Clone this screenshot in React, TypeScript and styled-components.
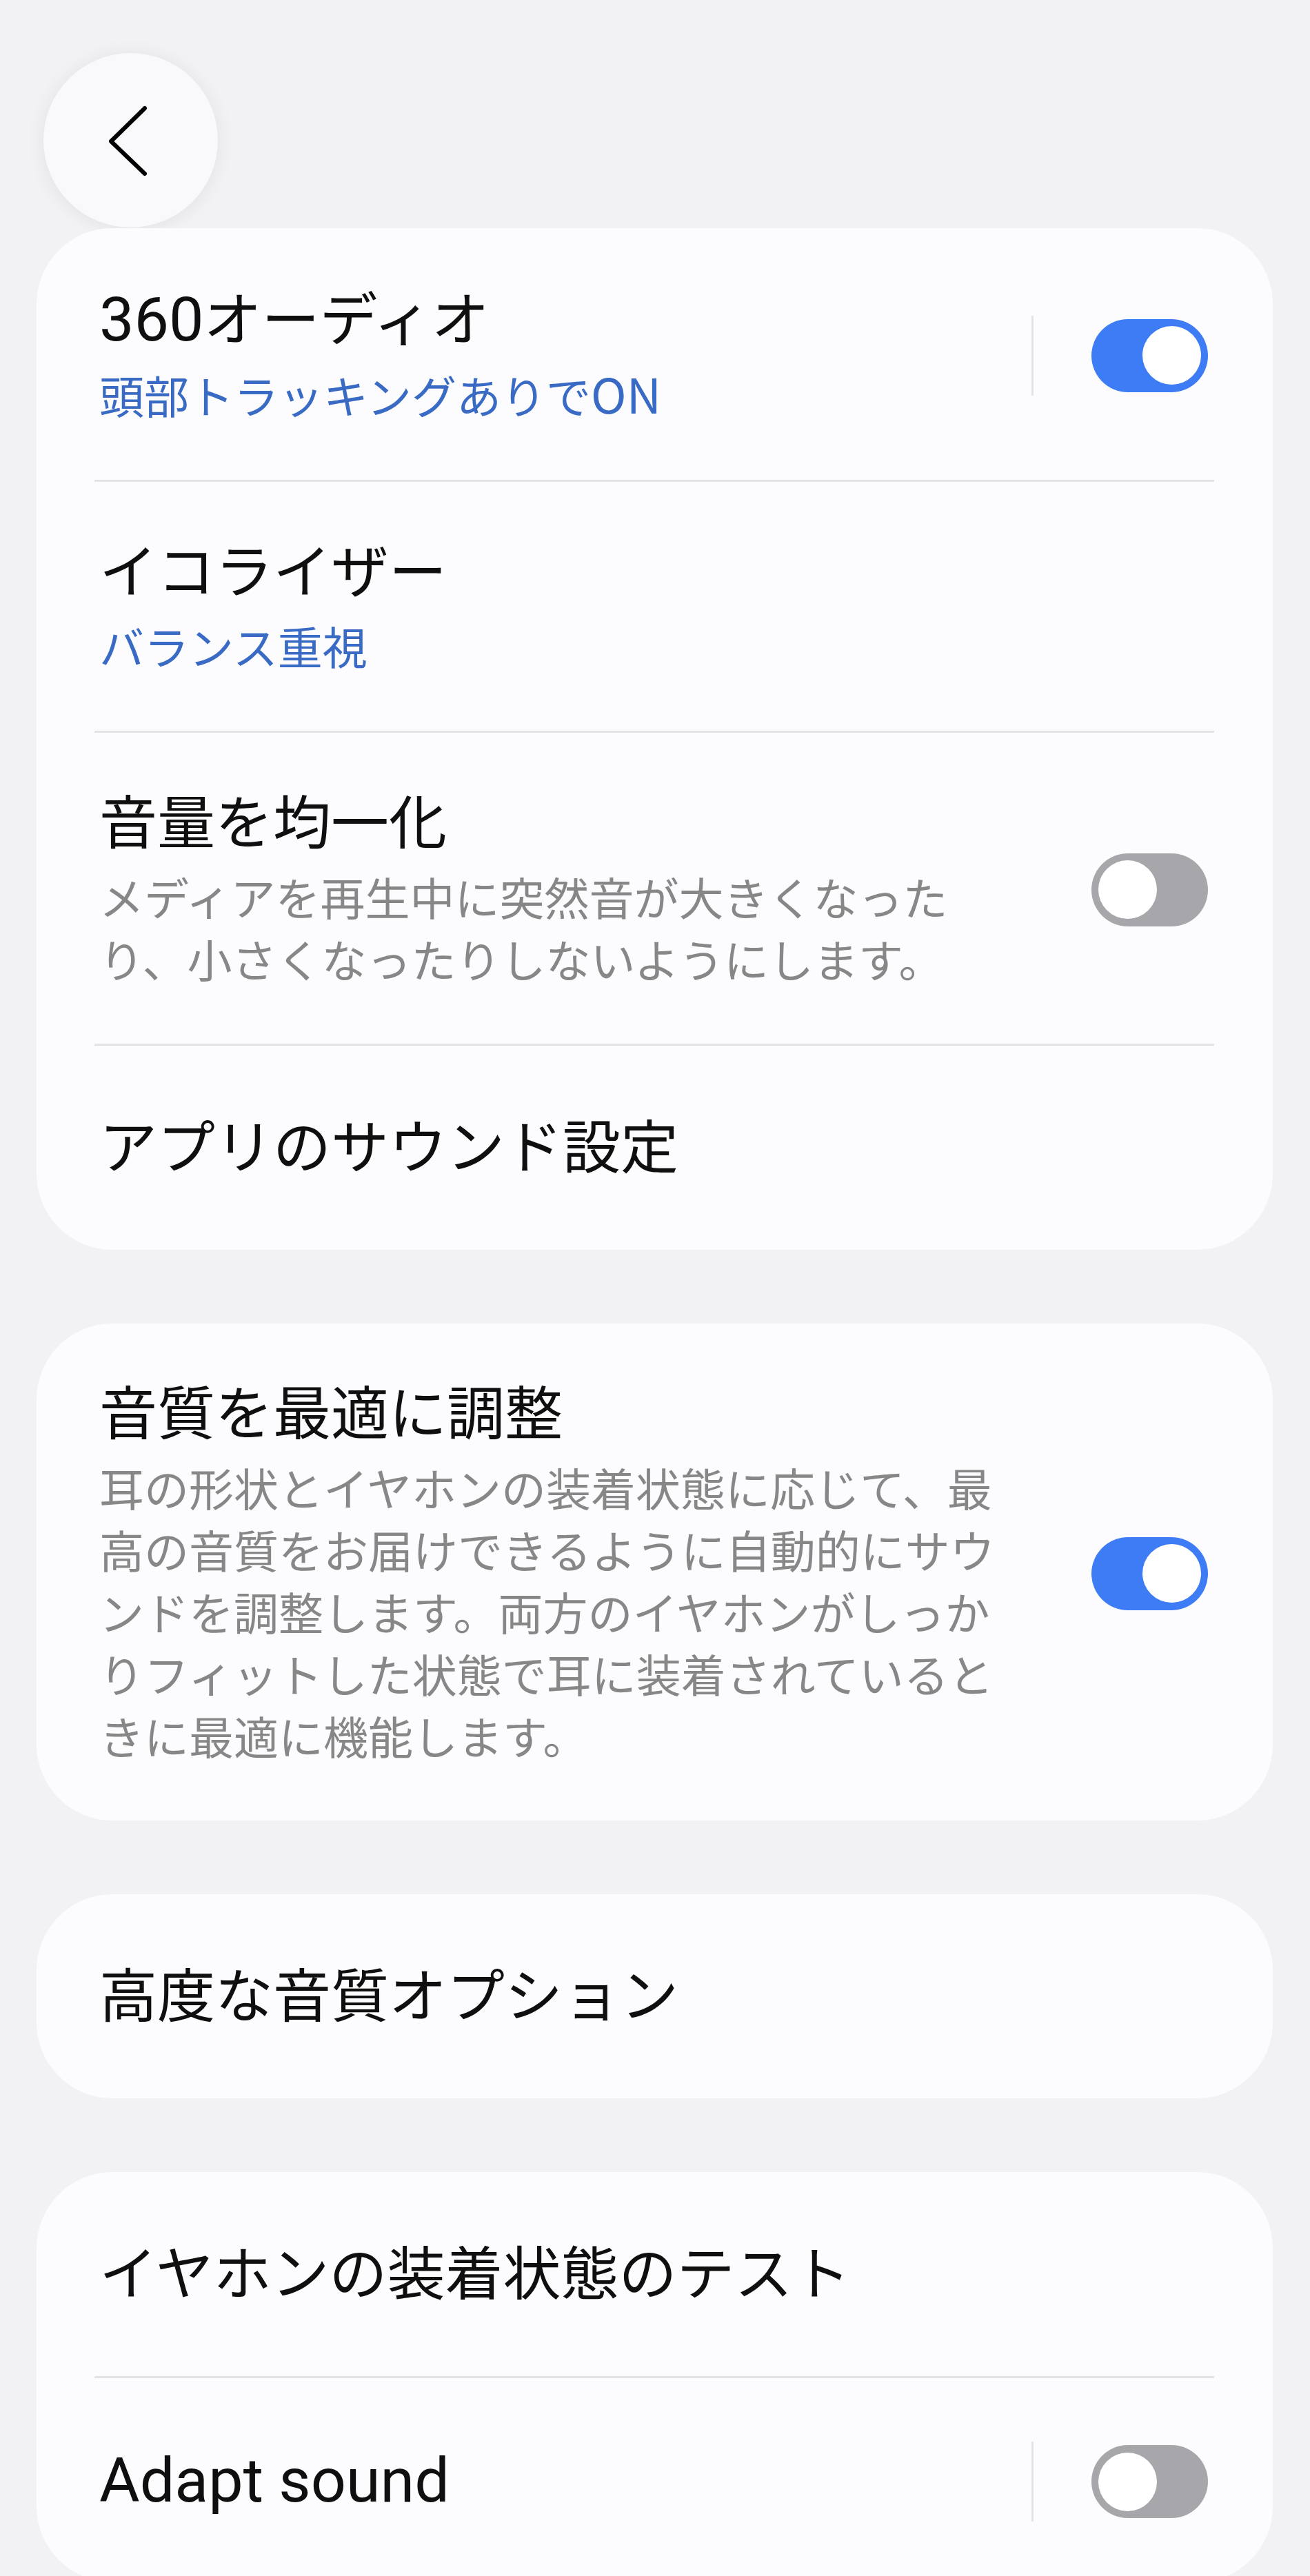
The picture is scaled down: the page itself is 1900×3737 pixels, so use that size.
import React from 'react';
import styled, { createGlobalStyle } from 'styled-components';

const GlobalStyle = createGlobalStyle`
  html, body {
    margin: 0;
    padding: 0;
    background: #f2f2f4;
  }
  body {
    font-family: Roboto, "Noto Sans CJK JP", sans-serif;
    -webkit-font-smoothing: antialiased;
  }
`;

const Page = styled.div`
  width: 1900px;
  min-height: 3737px;
  box-sizing: border-box;
  padding: 77px 54px 0 53px;
  background: #f2f2f4;
`;

const Header = styled.header`
  display: flex;
  align-items: center;
  padding-left: 10px;
  margin-bottom: 1px;
`;

const BackButton = styled.button`
  width: 253px;
  height: 253px;
  border: none;
  border-radius: 50%;
  background: #f9f9fb;
  box-shadow: 0 2px 28px rgba(0, 0, 0, 0.07);
  display: flex;
  align-items: center;
  justify-content: center;
  padding: 0;
`;

const Cards = styled.div`
  display: flex;
  flex-direction: column;
  gap: 107px;
`;

const Card = styled.section`
  background: #fcfcfe;
  border-radius: 110px;
  overflow: hidden;
`;

const Row = styled.div`
  display: flex;
  align-items: center;
  box-sizing: border-box;
  min-height: 296px;
  padding: 83px 94px 79px 91px;
`;

const TextCol = styled.div`
  flex: 1;
  max-width: 1320px;
  display: flex;
  flex-direction: column;
  gap: 9px;
`;

const Title = styled.div`
  font-size: 84px;
  line-height: 100px;
  color: #0f0f10;
  white-space: nowrap;
`;

const Latin = styled.span`
  font-size: 1.07em;
`;

const Sub = styled.div<{ $tone: 'blue' | 'gray' }>`
  font-size: 65px;
  line-height: 90px;
  color: ${(p) => (p.$tone === 'blue' ? '#3a6bc4' : '#878788')};
  font-family: "Noto Sans CJK JP", sans-serif;
`;

const Control = styled.div`
  flex: none;
  margin-left: auto;
  display: flex;
  align-items: center;
`;

const VDivider = styled.div`
  width: 3px;
  height: 116px;
  background: #e4e4e6;
  margin-right: 84px;
`;

const Track = styled.div<{ $on: boolean }>`
  width: 169px;
  height: 106px;
  border-radius: 53px;
  background: ${(p) => (p.$on ? '#3d7cf5' : '#a7a7ab')};
  display: flex;
  align-items: center;
  justify-content: ${(p) => (p.$on ? 'flex-end' : 'flex-start')};
  padding: 0 10px;
  box-sizing: border-box;
`;

const Knob = styled.div`
  width: 85px;
  height: 85px;
  border-radius: 50%;
  background: #ffffff;
`;

const Divider = styled.div`
  height: 3px;
  margin: 0 85px 0 84px;
  background: #e3e3e5;
`;

function Toggle({ on }: { on: boolean }) {
  return (
    <Track $on={on}>
      <Knob />
    </Track>
  );
}

type Item = {
  title: React.ReactNode;
  sub?: React.ReactNode;
  tone?: 'blue' | 'gray';
  toggle?: boolean;
  split?: boolean;
};

const groups: Item[][] = [
  [
    {
      title: (
        <>
          <Latin>360</Latin>オーディオ
        </>
      ),
      sub: (
        <>
          頭部トラッキングありで<Latin>ON</Latin>
        </>
      ),
      tone: 'blue',
      toggle: true,
      split: true,
    },
    { title: 'イコライザー', sub: 'バランス重視', tone: 'blue' },
    {
      title: '音量を均一化',
      sub: 'メディアを再生中に突然音が大きくなったり、小さくなったりしないようにします。',
      tone: 'gray',
      toggle: false,
    },
    { title: 'アプリのサウンド設定' },
  ],
  [
    {
      title: '音質を最適に調整',
      sub: '耳の形状とイヤホンの装着状態に応じて、最高の音質をお届けできるように自動的にサウンドを調整します。両方のイヤホンがしっかりフィットした状態で耳に装着されているときに最適に機能します。',
      tone: 'gray',
      toggle: true,
    },
  ],
  [{ title: '高度な音質オプション' }],
  [
    { title: 'イヤホンの装着状態のテスト' },
    { title: <Latin>Adapt sound</Latin>, toggle: false, split: true },
  ],
];

export default function App() {
  return (
    <Page>
      <GlobalStyle />
      <Header>
        <BackButton aria-label="戻る">
          <svg width="253" height="253" viewBox="0 0 253 253">
            <path
              d="M147 80 L98 128 L147 175"
              fill="none"
              stroke="#000"
              strokeWidth="6"
              strokeLinecap="round"
              strokeLinejoin="round"
            />
          </svg>
        </BackButton>
      </Header>
      <Cards>
        {groups.map((items, gi) => (
          <Card key={gi}>
            {items.map((it, i) => (
              <React.Fragment key={i}>
                {i > 0 && <Divider />}
                <Row>
                  <TextCol>
                    <Title>{it.title}</Title>
                    {it.sub && <Sub $tone={it.tone ?? 'gray'}>{it.sub}</Sub>}
                  </TextCol>
                  {it.toggle !== undefined && (
                    <Control>
                      {it.split && <VDivider />}
                      <Toggle on={it.toggle} />
                    </Control>
                  )}
                </Row>
              </React.Fragment>
            ))}
          </Card>
        ))}
      </Cards>
    </Page>
  );
}
